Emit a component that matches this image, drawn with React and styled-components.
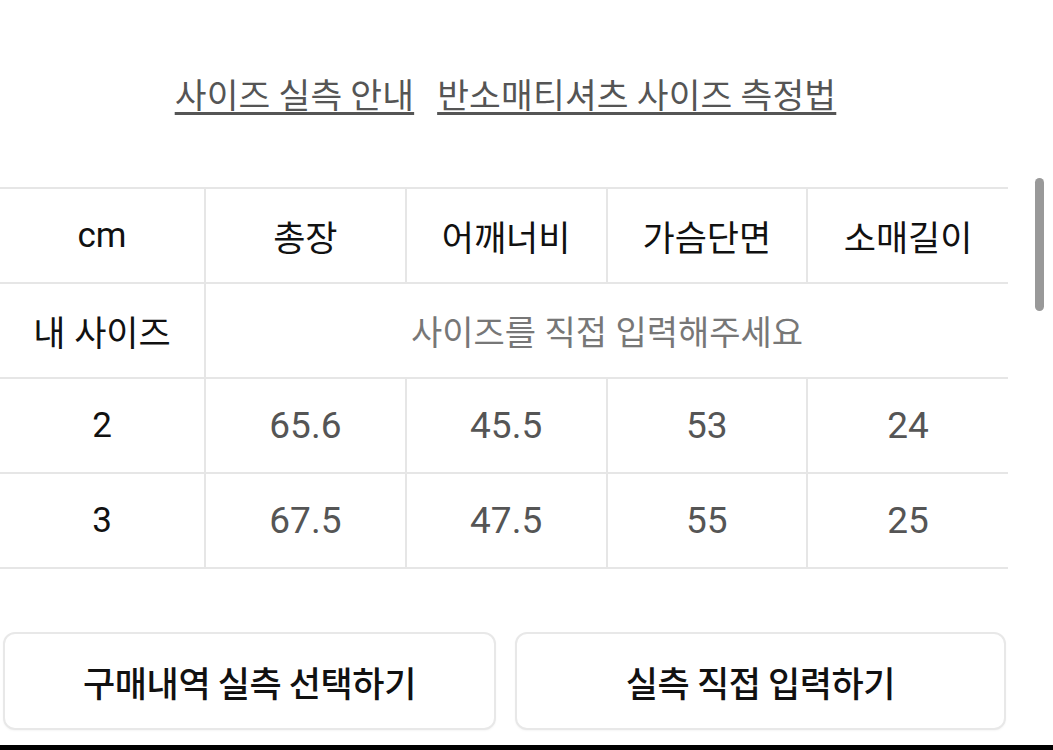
import React from 'react'
import styled, { createGlobalStyle } from 'styled-components'

const GlobalStyle = createGlobalStyle`
  html, body {
    margin: 0;
    padding: 0;
    background: #ffffff;
  }
  body {
    font-family: Roboto, "Noto Sans CJK KR", sans-serif;
    overflow: hidden;
  }
`

const headers = ['총장', '어깨너비', '가슴단면', '소매길이']
const rows = [
  { size: '2', values: ['65.6', '45.5', '53', '24'] },
  { size: '3', values: ['67.5', '47.5', '55', '25'] },
]

const App = () => {
  return (
    <Page>
      <GlobalStyle />
      <Links>
        <GuideLink>사이즈 실측 안내</GuideLink>
        <GuideLink>반소매티셔츠 사이즈 측정법</GuideLink>
      </Links>
      <TableWrap>
        <SizeTable>
          <colgroup>
            <col style={{ width: 205 }} />
            <col />
            <col />
            <col />
            <col />
          </colgroup>
          <tbody>
            <tr>
              <Cell $head>cm</Cell>
              {headers.map((h) => (
                <Cell key={h} $head>{h}</Cell>
              ))}
            </tr>
            <tr>
              <Cell $head>내 사이즈</Cell>
              <Cell colSpan={4} $hint>사이즈를 직접 입력해주세요</Cell>
            </tr>
            {rows.map((r) => (
              <tr key={r.size}>
                <Cell $head>{r.size}</Cell>
                {r.values.map((v, i) => (
                  <Cell key={i}>{v}</Cell>
                ))}
              </tr>
            ))}
          </tbody>
        </SizeTable>
        <ScrollThumb />
      </TableWrap>
      <Buttons>
        <ActionButton>구매내역 실측 선택하기</ActionButton>
        <ActionButton>실측 직접 입력하기</ActionButton>
      </Buttons>
      <BottomBar />
    </Page>
  )
}

export default App

const Page = styled.div`
  width: 1053px;
  height: 750px;
  display: flex;
  flex-direction: column;
  background: #fff;
`

const Links = styled.div`
  display: flex;
  justify-content: center;
  gap: 23px;
  padding-top: 70px;
  padding-right: 42px;
`

const GuideLink = styled.span`
  font-family: "Noto Sans CJK KR", sans-serif;
  font-size: 34.5px;
  line-height: 46px;
  color: #555;
  text-decoration: underline;
  text-decoration-thickness: 3px;
  text-underline-offset: 4px;
  text-decoration-color: #555;
  letter-spacing: 0.2px;
`

const TableWrap = styled.div`
  position: relative;
  margin-top: 71px;
`

const SizeTable = styled.table`
  width: 1008px;
  border-collapse: collapse;
  table-layout: fixed;
`

const Cell = styled.td`
  height: 93px;
  padding: 0;
  text-align: center;
  border-top: 2px solid #e6e6e6;
  border-bottom: 2px solid #e6e6e6;
  border-left: 2px solid #e6e6e6;
  font-family: Roboto, "Noto Sans CJK KR", sans-serif;
  font-size: ${(p) => (p.$head ? '35px' : '37px')};
  color: ${(p) => (p.$head ? '#111' : p.$hint ? '#777' : '#555')};
  &:first-child {
    border-left: none;
  }
  ${(p) => p.$hint && 'font-size: 34px;'}
`

const ScrollThumb = styled.div`
  position: absolute;
  left: 1035px;
  top: -9px;
  width: 9px;
  height: 133px;
  border-radius: 5px;
  background: #999;
`

const Buttons = styled.div`
  display: grid;
  grid-template-columns: 493px 491px;
  gap: 19px;
  padding-left: 3px;
  margin-top: 63px;
`

const ActionButton = styled.button`
  height: 98px;
  border: 2px solid #e8e8e8;
  border-radius: 12px;
  background: #fff;
  box-shadow: 0 1px 2px rgba(0, 0, 0, 0.04);
  font-family: "Noto Sans CJK KR", sans-serif;
  font-size: 35px;
  font-weight: 500;
  color: #111;
  letter-spacing: -0.4px;
  padding: 0;
`

const BottomBar = styled.div`
  margin-top: auto;
  height: 5px;
  background: #000;
`
